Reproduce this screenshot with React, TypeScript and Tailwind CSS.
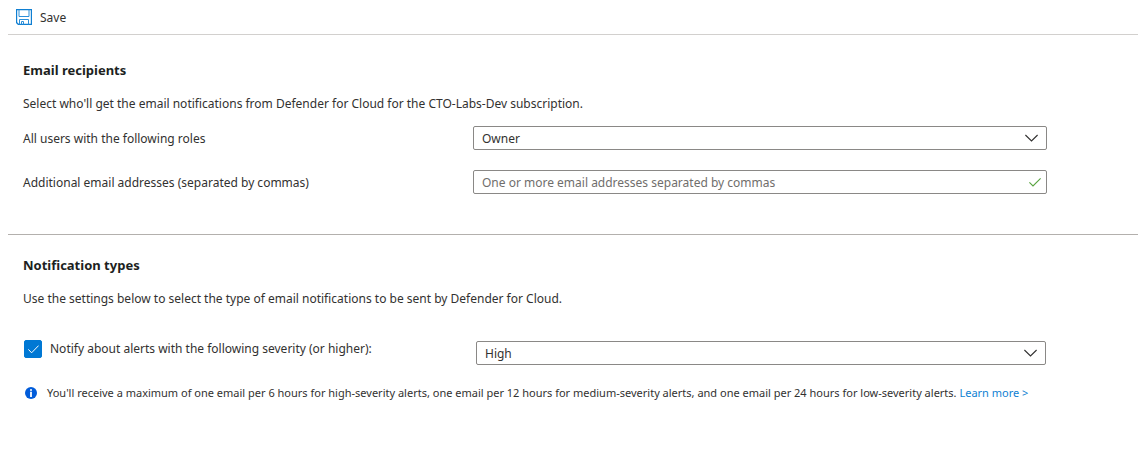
import { useState } from "react";

function SaveIcon() {
  return (
    <svg width="16" height="16" viewBox="0 0 16 16" fill="none" aria-hidden="true">
      <path d="M.5.5h15v15h-13l-2-2z" fill="#fff" stroke="#0f7fd2" strokeWidth="1.4" />
      <path d="M3 .5v7h10v-7" stroke="#2c8fd9" />
      <path d="M3.5 15.5v-5h9v5" stroke="#2c8fd9" />
      <path d="M5.5 15.5v-3h2v3" stroke="#2c8fd9" />
    </svg>
  );
}

function InfoIcon() {
  return (
    <svg className="shrink-0" width="12" height="12" viewBox="0 0 12 12" aria-hidden="true">
      <circle cx="6" cy="6" r="6" fill="#015cda" />
      <circle cx="6" cy="3" r="1" fill="#fff" />
      <path d="M5.1 4.8h1.8V10H5.1z" fill="#fff" />
    </svg>
  );
}

interface DropdownProps {
  id: string;
  label?: string;
  options: string[];
}

function Dropdown({ id, label, options }: DropdownProps) {
  return (
    <div className="relative">
      <select
        id={id}
        aria-label={label}
        className="block h-6 w-full appearance-none rounded-xs border border-[#8a8886] bg-white pt-0.5 pr-8 pl-2 text-xs leading-5 text-[#323130]"
      >
        {options.map((option) => (
          <option key={option}>{option}</option>
        ))}
      </select>
      <svg
        className="pointer-events-none absolute top-2 right-2"
        width="14"
        height="8"
        viewBox="0 0 14 8"
        fill="none"
        stroke="#323130"
        strokeWidth="1.1"
        aria-hidden="true"
      >
        <path d="M.4 1 6.5 7 12.6 1" />
      </svg>
    </div>
  );
}

export default function App() {
  const [notify, setNotify] = useState(true);

  return (
    <main className="bg-white pl-2 font-['Noto_Sans','Open_Sans',sans-serif] text-xs leading-[22px] text-[#323130]">
      <div className="flex h-[35px] items-center border-b border-[#d2d0ce] pl-2">
        <button type="button" className="flex items-center gap-2">
          <SaveIcon />
          <span className="pt-0.5">Save</span>
        </button>
      </div>

      <section className="border-b border-[#b3b0ad] pt-[25px] pr-[91px] pb-10 pl-[15px]">
        <h2 className="text-[13px] leading-5 font-bold text-[#201f1e]">Email recipients</h2>
        <p className="mt-[13px]">
          Select who'll get the email notifications from Defender for Cloud for the CTO-Labs-Dev subscription.
        </p>
        <div className="mt-[11px] grid grid-cols-[450px_1fr] items-center gap-y-5">
          <label htmlFor="roles" className="pt-0.5">
            All users with the following roles
          </label>
          <Dropdown id="roles" options={["Owner", "Contributor", "Reader"]} />
          <label htmlFor="emails" className="pt-0.5">
            Additional email addresses (separated by commas)
          </label>
          <div className="relative">
            <input
              id="emails"
              type="text"
              placeholder="One or more email addresses separated by commas"
              className="block h-6 w-full rounded-xs border border-[#8a8886] bg-white pr-8 pl-2 text-xs leading-5 placeholder:text-[#706e6c]"
            />
            <svg
              className="pointer-events-none absolute top-2 right-1.5"
              width="12"
              height="9"
              viewBox="0 0 12 9"
              fill="none"
              stroke="#57a33e"
              strokeWidth="1.1"
              aria-hidden="true"
            >
              <path d="M.4 4.4 4 8 11.6.4" />
            </svg>
          </div>
        </div>
      </section>

      <section className="pt-5 pr-[92px] pl-[15px]">
        <h2 className="text-[13px] leading-5 font-bold text-[#201f1e]">Notification types</h2>
        <p className="mt-[13px]">
          Use the settings below to select the type of email notifications to be sent by Defender for Cloud.
        </p>
        <div className="mt-7 grid grid-cols-[453px_1fr]">
          <label className="flex items-center gap-2 self-start pl-px">
            <span className="relative size-[18px]">
              <input
                type="checkbox"
                checked={notify}
                onChange={(event) => setNotify(event.target.checked)}
                className="peer block size-[18px] appearance-none rounded-xs border border-[#0078d4] bg-white checked:bg-[#0078d4]"
              />
              <svg
                className="pointer-events-none absolute top-[5px] left-1 hidden peer-checked:block"
                width="11"
                height="9"
                viewBox="0 0 11 9"
                fill="none"
                stroke="#fff"
                aria-hidden="true"
              >
                <path d="M.4 4.4 3.6 7.8 10.6.6" />
              </svg>
            </span>
            Notify about alerts with the following severity (or higher):
          </label>
          <div className="pt-[3px]">
            <Dropdown id="severity" label="Alert severity" options={["High", "Medium", "Low"]} />
          </div>
        </div>
      </section>

      <div className="mt-[17px] flex items-center gap-2.5 pl-[17px] text-[11px]">
        <InfoIcon />
        <p>
          You'll receive a maximum of one email per 6 hours for high-severity alerts, one email per 12 hours for
          medium-severity alerts, and one email per 24 hours for low-severity alerts.{" "}
          <a href="#learn-more" className="text-[#0f7fd2]">
            Learn more &gt;
          </a>
        </p>
      </div>
    </main>
  );
}
